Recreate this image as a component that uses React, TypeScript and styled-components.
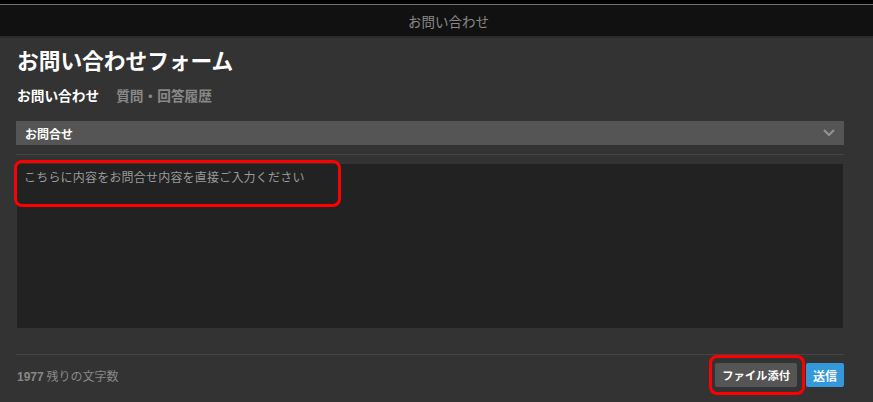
import React from 'react';
import styled, { createGlobalStyle } from 'styled-components';

const GlobalStyle = createGlobalStyle`
  html, body {
    margin: 0;
    padding: 0;
    background: #333333;
    font-family: "Noto Sans CJK JP", "Noto Sans", sans-serif;
  }
`;

const colors = {
  page: '#333333',
  topbar: '#111111',
  field: '#555555',
  area: '#222222',
  rule: '#444444',
  muted: '#888888',
  white: '#ffffff',
  blue: '#3498db',
  mark: '#ff0000',
};

const Page = styled.div`
  min-height: 402px;
  background: ${colors.page};
`;

const TopStrip = styled.div`
  height: 4px;
  background: #000;
  border-bottom: 1px solid #6f6f6f;
`;

const TopBar = styled.header`
  height: 31px;
  background: ${colors.topbar};
  border-bottom: 2px solid #2a2a2a;
  display: flex;
  align-items: center;
  justify-content: center;
  padding-left: 24px;
  font-size: 13.5px;
  color: ${colors.muted};
`;

const Main = styled.main`
  padding: 0 29px 16px 16px;
`;

const Title = styled.h1`
  margin: 0;
  padding: 7px 0 0 1px;
  font-size: 21.7px;
  line-height: 30px;
  font-weight: 700;
  color: ${colors.white};
`;

const Tabs = styled.nav`
  display: flex;
  gap: 17px;
  padding: 9px 0 0 1px;
  height: 22px;
  align-items: center;
`;

const Tab = styled.span<{ $active?: boolean }>`
  font-size: 13.7px;
  font-weight: 700;
  color: ${(p) => (p.$active ? colors.white : colors.muted)};
`;

const Select = styled.div`
  margin-top: 15px;
  height: 24px;
  background: ${colors.field};
  display: flex;
  align-items: center;
  justify-content: space-between;
  padding: 0 8px 0 9px;
  font-size: 12px;
  font-weight: 700;
  color: ${colors.white};
`;

const Rule = styled.div<{ $gap: number }>`
  margin-top: ${(p) => p.$gap}px;
  height: 1px;
  background: ${colors.rule};
`;

const AreaWrap = styled.div`
  position: relative;
  margin: 9px 1px 0 1px;
`;

const Area = styled.div`
  height: 164px;
  background: ${colors.area};
  padding: 4px 7px;
  box-sizing: border-box;
  font-size: 12px;
  line-height: 18px;
  color: #9a9a9a;
  letter-spacing: 0.2px;
`;

const Marker = styled.div<{ $top: number; $left: number; $w: number; $h: number }>`
  position: absolute;
  top: ${(p) => p.$top}px;
  left: ${(p) => p.$left}px;
  width: ${(p) => p.$w}px;
  height: ${(p) => p.$h}px;
  border: 3px solid ${colors.mark};
  border-radius: 8px;
  box-sizing: border-box;
  pointer-events: none;
`;

const Footer = styled.div`
  display: flex;
  align-items: center;
  justify-content: space-between;
  height: 24px;
  margin-top: 8px;
`;

const Count = styled.span`
  font-size: 12px;
  color: ${colors.muted};
  padding-left: 1px;
`;

const CountNum = styled.b`
  font-family: "Liberation Sans", Arial, sans-serif;
  font-weight: 700;
`;

const Actions = styled.div`
  position: relative;
  display: flex;
  gap: 9px;
`;

const Button = styled.button<{ $primary?: boolean }>`
  height: 24px;
  border: none;
  border-radius: 2px;
  padding: 0 7px;
  background: ${(p) => (p.$primary ? colors.blue : colors.field)};
  color: ${colors.white};
  font-family: "Noto Sans CJK JP", sans-serif;
  font-size: ${(p) => (p.$primary ? 12 : 11.3)}px;
  font-weight: 700;
  cursor: pointer;
`;

const Chevron = () => (
  <svg width="14" height="10" viewBox="0 0 14 10">
    <path d="M2 2 L7 7 L12 2" fill="none" stroke="#8f9399" strokeWidth="2.2" />
  </svg>
);

export default function App() {
  return (
    <Page>
      <GlobalStyle />
      <TopStrip />
      <TopBar>お問い合わせ</TopBar>
      <Main>
        <Title>お問い合わせフォーム</Title>
        <Tabs>
          <Tab $active>お問い合わせ</Tab>
          <Tab>質問・回答履歴</Tab>
        </Tabs>
        <Select>
          <span>お問合せ</span>
          <Chevron />
        </Select>
        <Rule $gap={9} />
        <AreaWrap>
          <Area>こちらに内容をお問合せ内容を直接ご入力ください</Area>
          <Marker $top={-4} $left={-3} $w={327} $h={47} />
        </AreaWrap>
        <Rule $gap={26} />
        <Footer>
          <Count>
            <CountNum>1977</CountNum> 残りの文字数
          </Count>
          <Actions>
            <Button>ファイル添付</Button>
            <Button $primary>送信</Button>
            <Marker $top={-8} $left={-6} $w={96} $h={40} />
          </Actions>
        </Footer>
      </Main>
    </Page>
  );
}
